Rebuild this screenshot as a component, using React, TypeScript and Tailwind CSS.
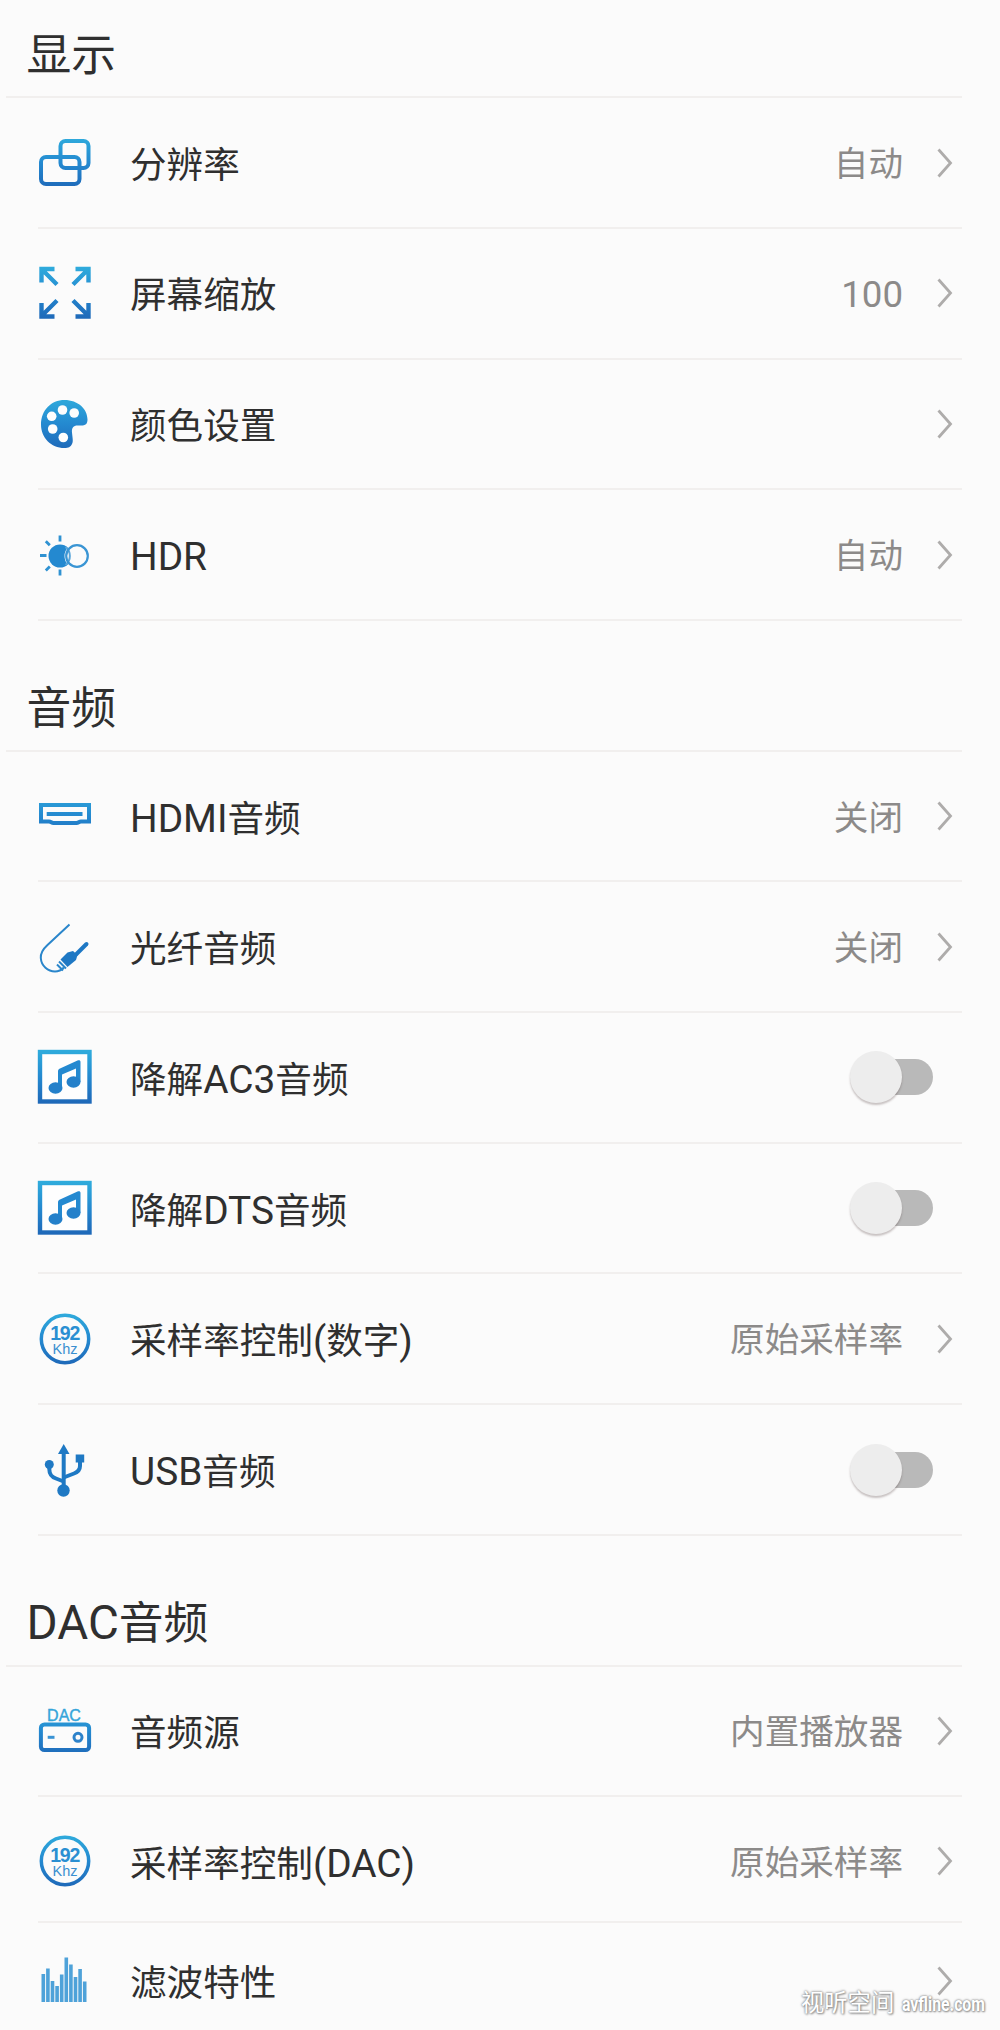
import React from "react";

const BLUE = "url(#icon-blue)";

function IconBox({ children }: { children: React.ReactNode }) {
  return (
    <svg className="block h-[52px] w-[52px] overflow-visible" viewBox="0 0 52 52" fill="none">
      {children}
    </svg>
  );
}

/** Shared gradient; user space units so that plain lines get it as well. */
function IconDefs() {
  return (
    <svg className="absolute h-0 w-0" aria-hidden="true">
      <defs>
        <linearGradient id="icon-blue" gradientUnits="userSpaceOnUse" x1="0" y1="0" x2="0" y2="52">
          <stop offset="0" stopColor="#2fabdc" />
          <stop offset="0.5" stopColor="#2489d0" />
          <stop offset="1" stopColor="#1e68b8" />
        </linearGradient>
      </defs>
    </svg>
  );
}

function ResolutionIcon() {
  return (
    <IconBox>
      <g stroke={BLUE} strokeWidth="4">
        <rect x="21.5" y="4" width="28" height="27" rx="5" />
        <rect x="2" y="20" width="38.5" height="27" rx="5" />
      </g>
    </IconBox>
  );
}

function ZoomIcon() {
  return (
    <IconBox>
      <g stroke={BLUE} strokeWidth="4.4">
        <path d="M15.5 2H2.5v13.5M3 2.5l15 15" />
        <path d="M36.5 2H49.500v13.5M49 2.5L34 17.5" />
        <path d="M15.5 49.500H2.5V36M3 48.500l15-15" />
        <path d="M36.5 49.500H49.500V36M49 48.500L34 33.500" />
      </g>
    </IconBox>
  );
}

function PaletteIcon() {
  return (
    <IconBox>
      <path
        d="M25.5 2C39 2 48.5 11 48.5 21.5C48.5 26 46.5 27.5 42 27.5H38.5C34.5 27.5 32.5 30 33 34.5C33.5 40 34.5 43.5 33 46C31.5 49 29.5 50 25.5 50C12 50 2 39.5 2 26.5C2 12.5 12 2 25.5 2Z"
        fill={BLUE}
      />
      <g fill="#fdfdfd">
        <circle cx="12.7" cy="18.3" r="4.8" />
        <circle cx="23.5" cy="12" r="4.8" />
        <circle cx="35.2" cy="15" r="4.8" />
        <circle cx="13.7" cy="31" r="4.8" />
        <circle cx="24.3" cy="39.5" r="4.8" />
      </g>
    </IconBox>
  );
}

function HdrIcon() {
  return (
    <IconBox>
      <circle cx="21" cy="27" r="11.5" fill="#2489d0" />
      <circle cx="38" cy="27" r="12.5" fill="#fbfbfb" />
      <path d="M26.5 18a11.5 11.5 0 0 1 0 18" stroke="#5aa6da" strokeWidth="2" />
      <circle cx="38" cy="27" r="10.8" stroke="#3a95d4" strokeWidth="2.2" />
      <path
        d="M21 6.5v6M21 40.5v6M1 26.5h6.5M6.800 12.300l4 4M6.800 41.500l4-4"
        stroke="#2f92d2"
        strokeWidth="2.8"
      />
    </IconBox>
  );
}

function HdmiIcon() {
  return (
    <IconBox>
      <path
        d="M2 15H50V31.5H42C40 31.5 39.5 33 37.5 33H14.5C12.5 33 12 31.5 10 31.5H2Z"
        stroke={BLUE}
        strokeWidth="4"
      />
      <path d="M7.7 24H43.5" stroke={BLUE} strokeWidth="4" />
    </IconBox>
  );
}

function OpticalIcon() {
  return (
    <IconBox>
      <path
        d="M30.5 3.5L8.5 24C3 29 1.5 32.5 1.8 37C2.3 45 9 50.5 16 50.5C20 50.5 22.5 49 25 46.5"
        stroke="#2a86cb"
        strokeWidth="2"
      />
      <path d="M37 33.5L47.5 23" stroke="#1e78c4" strokeWidth="4" strokeLinecap="round" />
      <path d="M28.5 31.5L34 30L38.5 34L37 39L28.5 46L21.5 38.5Z" fill="#1e78c4" />
      <path d="M20 40.5L27 47.5M18 43.5L24 49.5" stroke="#2a86cb" strokeWidth="2" />
    </IconBox>
  );
}

function MusicIcon() {
  return (
    <IconBox>
      <rect x="1" y="1" width="49.5" height="49.5" fill="#fefefe" stroke={BLUE} strokeWidth="4.4" />
      <path
        d="M19 37V20.5C19 19 19.5 18.2 21 17.5L38.5 9.500C40.5 9 41.5 9.500 41.5 11V31H37V17.5L23 23.5V37Z"
        fill="#2489d0"
      />
      <ellipse cx="16.5" cy="37" rx="7" ry="5.8" fill="#2480ca" />
      <ellipse cx="34.5" cy="31" rx="7" ry="5.8" fill="#2480ca" />
    </IconBox>
  );
}

function SampleRateIcon() {
  return (
    <IconBox>
      <circle cx="26" cy="26" r="23.7" stroke={BLUE} strokeWidth="3.5" />
      <text
        x="26.3"
        y="26.5"
        textAnchor="middle"
        textLength="30"
        className="font-['Liberation_Sans',sans-serif] text-[19.5px] font-bold"
        fill="#2a8fd2"
      >
        192
      </text>
      <text
        x="26"
        y="41"
        textAnchor="middle"
        className="font-['Liberation_Sans',sans-serif] text-[14.5px]"
        fill="#3a8fd0"
      >
        Khz
      </text>
    </IconBox>
  );
}

function UsbIcon() {
  return (
    <IconBox>
      <g stroke="#1f79c4" strokeWidth="4">
        <path d="M24.7 6V46" />
        <path d="M10.3 20V25C10.3 31 13 33 17 34.5L24.7 37.5" />
        <path d="M41 14V22C41 26 39 28 35 29.5L24.7 33.5" />
      </g>
      <g fill="#1f79c4">
        <path d="M24.7 0L30.5 10H19Z" />
        <circle cx="10.3" cy="20.5" r="4.5" />
        <rect x="36.7" y="10.5" width="8.5" height="8" />
        <circle cx="24.5" cy="46.5" r="6.2" />
      </g>
    </IconBox>
  );
}

function DacIcon() {
  return (
    <IconBox>
      <text
        x="25"
        y="15.5"
        textAnchor="middle"
        className="font-['Liberation_Sans',sans-serif] text-[16px]"
        fill="#35a5da"
        stroke="#35a5da"
        strokeWidth="0.4"
      >
        DAC
      </text>
      <rect x="1.9" y="19.5" width="48.2" height="25.5" rx="3.5" stroke={BLUE} strokeWidth="4" />
      <path d="M8.7 32.3H15.5" stroke="#3a93d4" strokeWidth="3" />
      <circle cx="39" cy="32.3" r="4" stroke="#2d82ca" strokeWidth="3" />
    </IconBox>
  );
}

// top edge of every bar, left to right; they all stand on y = 47
const BAR_TOPS = [19, 13.5, 26, 31, 19.5, 2.5, 9.5, 22, 14, 26.5];

function FilterIcon() {
  return (
    <IconBox>
      {BAR_TOPS.map((top, i) => (
        <rect key={i} x={2.5 + i * 4.6} y={top} width="3.6" height={47 - top} fill="#2f92d2" opacity="0.85" />
      ))}
    </IconBox>
  );
}

/** Latin runs are set slightly larger than the CJK characters beside them. */
function Mixed({ text }: { text: string }) {
  return (
    <>
      {text.split(/([A-Za-z0-9()]+)/).map((part, i) =>
        /^[A-Za-z0-9()]+$/.test(part) ? (
          <span key={i} className="text-[1.06em]">
            {part}
          </span>
        ) : (
          part
        )
      )}
    </>
  );
}

function Chevron() {
  return (
    <svg className="ml-[34px] h-[30px] w-[16px]" viewBox="0 0 16 30" fill="none">
      <path d="M1.5 1.5L13.5 15L1.5 28.5" stroke="#aeacab" strokeWidth="2.8" />
    </svg>
  );
}

function Toggle() {
  return (
    <button type="button" role="switch" aria-checked="false" className="mr-[29px] flex h-[52px] items-center">
      <span className="z-10 h-[52px] w-[52px] rounded-full bg-[#ededed] shadow-[0_2px_2px_rgba(80,60,60,0.3)]" />
      <span className="-ml-[36px] h-9 w-[67px] rounded-full bg-[#b9b9b9]" />
    </button>
  );
}

type Item = {
  icon: React.ReactNode;
  label: string;
  value?: string;
  toggle?: boolean;
  size?: string;
};

type Section = { title: string; items: Item[] };

const SECTIONS: Section[] = [
  {
    title: "显示",
    items: [
      { icon: <ResolutionIcon />, label: "分辨率", value: "自动" },
      { icon: <ZoomIcon />, label: "屏幕缩放", value: "100" },
      { icon: <PaletteIcon />, label: "颜色设置" },
      { icon: <HdrIcon />, label: "HDR", value: "自动" },
    ],
  },
  {
    title: "音频",
    items: [
      { icon: <HdmiIcon />, label: "HDMI音频", value: "关闭" },
      { icon: <OpticalIcon />, label: "光纤音频", value: "关闭" },
      { icon: <MusicIcon />, label: "降解AC3音频", toggle: true },
      { icon: <MusicIcon />, label: "降解DTS音频", toggle: true },
      { icon: <SampleRateIcon />, label: "采样率控制(数字)", value: "原始采样率" },
      { icon: <UsbIcon />, label: "USB音频", toggle: true },
    ],
  },
  {
    title: "DAC音频",
    items: [
      { icon: <DacIcon />, label: "音频源", value: "内置播放器" },
      { icon: <SampleRateIcon />, label: "采样率控制(DAC)", value: "原始采样率", size: "h-[125.7px] pt-1" },
      { icon: <FilterIcon />, label: "滤波特性", size: "h-[119px]" },
    ],
  },
];

function Row({ item }: { item: Item }) {
  return (
    <div
      className={`mx-[38px] flex shrink-0 items-center border-b-2 border-[#f1efee] pl-px ${
        item.size ?? "h-[130.7px]"
      }`}
    >
      {item.icon}
      <span className="ml-[39px] flex-1 whitespace-nowrap pt-[6px] text-[36.6px] leading-[48px] text-[#2f2f2f]">
        <Mixed text={item.label} />
      </span>
      {item.toggle ? (
        <Toggle />
      ) : (
        <div className="mr-[9px] flex items-center">
          {item.value && (
            <span className="whitespace-nowrap pt-[3px] text-[34.6px] leading-[48px] text-[#8c8a89]">
              <Mixed text={item.value} />
            </span>
          )}
          <Chevron />
        </div>
      )}
    </div>
  );
}

export default function App() {
  return (
    <div className="relative flex h-[2030px] w-[1000px] flex-col overflow-hidden bg-[#fbfbfb] font-[Roboto,'Noto_Sans_CJK_SC',sans-serif]">
      <IconDefs />
      {SECTIONS.map((section, i) => (
        <section key={section.title} className="flex shrink-0 flex-col">
          <h2
            className={`ml-[6px] mr-[38px] flex items-end border-b-2 border-[#f1efee] pb-[10.5px] pl-[20.5px] text-[44.8px] leading-[60px] text-[#2f2f2f] ${
              i === 0 ? "h-[98.3px]" : "h-[130.7px]"
            }`}
          >
            <span>
              <Mixed text={section.title} />
            </span>
          </h2>
          {section.items.map((item) => (
            <Row key={item.label} item={item} />
          ))}
        </section>
      ))}

      {/* Site mark over the bottom right corner */}
      <div className="absolute bottom-[13px] right-[15px] flex h-7 w-[184px] items-center whitespace-nowrap text-white [text-shadow:0_0_2px_#888,0_0_3px_#999,1px_1px_2px_#999]">
        <span className="w-[101px] text-[23.3px] leading-7">视听空间</span>
        <span className="w-[83px] origin-left scale-x-[0.77] pt-px text-[20.5px] font-bold leading-7">avfline.com</span>
      </div>
    </div>
  );
}
